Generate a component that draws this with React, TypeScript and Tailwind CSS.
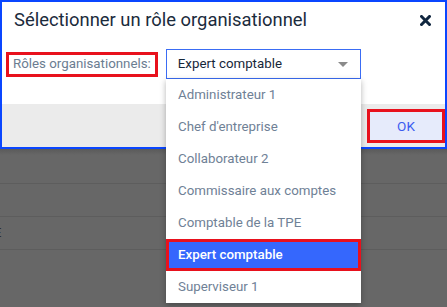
import React from "react";

const items = [
  "Administrateur 1",
  "Chef d'entreprise",
  "Collaborateur 2",
  "Commissaire aux comptes",
  "Comptable de la TPE",
  "Expert comptable",
  "Superviseur 1",
];

export default function App() {
  return (
    <div
      className="relative w-[447px] h-[307px] overflow-hidden bg-[#676767]"
      style={{ fontFamily: "Roboto, 'Liberation Sans', sans-serif" }}
    >
      {/* Dialog */}
      <div className="flex flex-col border-2 border-[#0a46ff] bg-white">
        <div className="flex items-start justify-between pl-[12px] pr-[14px] pt-[6px]">
          <div className="text-[18.4px] leading-[24px] text-[#1b2b3c]">
            Sélectionner un rôle organisationnel
          </div>
          <svg width="11" height="11" viewBox="0 0 11 11" className="mt-[7px]">
            <path d="M1.5 1.5 L9.5 9.5 M9.5 1.5 L1.5 9.5" stroke="#10263f" strokeWidth="3" strokeLinecap="square" />
          </svg>
        </div>
        <div className="flex items-center pt-[17px] pb-[25px] pl-[4px]">
          <div className="border-[3px] border-[#e8111d] px-[4px] h-[25px] flex items-center text-[13.3px] text-[#6b7d91]">
            Rôles organisationnels:
          </div>
          <div className="ml-[8px] w-[195px] h-[30px] border border-[#3a6cf4] flex items-center justify-between pl-[11px] pr-[12px]">
            <span className="text-[13.3px] text-[#16273a]">Expert comptable</span>
            <svg width="10" height="5" viewBox="0 0 10 5">
              <path d="M0 0 L10 0 L5 5 Z" fill="#8a8a8a" />
            </svg>
          </div>
        </div>
        <div className="h-[43px] bg-[#ebebeb] flex justify-end items-start pt-[5px]">
          <div className="w-[78px] h-[34px] border-[3px] border-[#e8111d] bg-[#e6ebfb] flex items-center justify-center text-[13.5px] text-[#3b5cf0]">
            OK
          </div>
        </div>
      </div>

      {/* Background page under overlay */}
      <div className="h-[6px] bg-gradient-to-b from-[#5a5a5a] to-[#676767] -mb-[6px]" />
      <div className="h-[35px] border-b border-[#5d5d5d]" />
      <div className="h-[33px] border-b border-[#5d5d5d]" />
      <div className="h-[33px] border-b border-[#5d5d5d] flex items-center">
        <span className="ml-[-6px] text-[13px] text-[#2b2b2b]">E</span>
      </div>

      {/* Dropdown list */}
      <div className="absolute left-[166px] top-[79px] w-[195px] bg-white shadow-[0_2px_6px_rgba(0,0,0,0.3)] flex flex-col">
        {items.map((it) =>
          it === "Expert comptable" ? (
            <div
              key={it}
              className="h-[32px] border-[3px] border-[#e8111d] bg-[#3567fd] flex items-center pl-[9px] text-[13.3px] font-medium text-white"
            >
              {it}
            </div>
          ) : (
            <div key={it} className="h-[32px] flex items-center pl-[12px] text-[13.3px] text-[#6f8196]">
              {it}
            </div>
          )
        )}
      </div>
    </div>
  );
}
